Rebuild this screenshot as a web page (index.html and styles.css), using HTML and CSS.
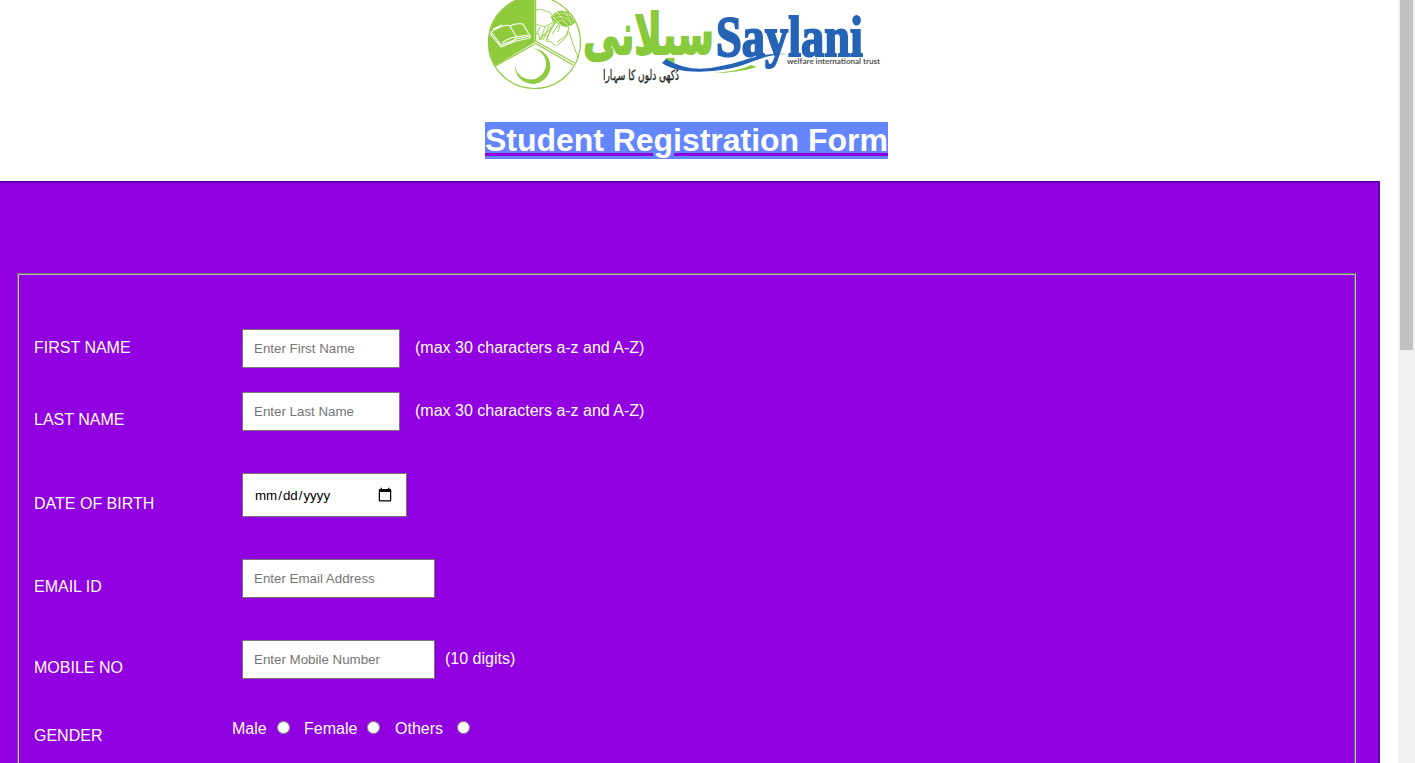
FILE: index.html
```html
<!DOCTYPE html>
<html lang="en">
<head>
<meta charset="utf-8">
<title>Student Registration Form</title>
<link rel="stylesheet" href="styles.css">
</head>
<body>
<div class="page">
<main class="content">
  <header class="header">
    <svg class="logo" viewBox="486 0 396 92" role="img" aria-label="Saylani">
      <g fill="none" stroke="#8fcb3c" stroke-width="1.2" stroke-linejoin="round">
        <circle cx="534.4" cy="42.5" r="46"/>
        <path d="M534 42V-3.5A46 46 0 0 0 495 65Z" fill="#8fcb3c"/>
        <path d="M535.6-3V41L574.5 63M534 44.5 495.5 66M534 42.5 573 65"/>
        <path stroke-width=".9" d="M536 10c5-2 8 1 13 2 5 2 2 7 5 11M536 25c5-1 6 3 10 1l8-4c4-2-3 8-7 10l-5 4M540 27l-4 8M545 27l-5 13M549 26l-6 14M551 28l-5 13M538 33l2 7M541 40c2-7 6-7 7 0M546 41l5 1 5 4M550 28c5-8 8-5 13-2l6 1-2 8-10 7M568 31c-1 8-8 11-11 15M569 32l9 26M558 32l3-10M552 34l7-10M547 37l8-14"/>
        <path d="M551 17c5-9 17-7 21-2 7 7 1 12-8 11l-12-6Z" stroke="none" fill="#8fcb3c"/>
        <path d="M553 16c5-5 15-3 21 3M554 19c7-5 14-1 17 5M557 22c4-3 8-1 10 3M557 12l11 14M564 11l8 12M569 13l5 8M553 17l8 8" stroke="#fff" stroke-width=".8" stroke-dasharray="1.4 1"/>
      </g>
      <path d="M532 48.5A17.7 17.7 0 1 1 515 64.500A15.500 15.500 0 1 0 532 48.500Z" fill="#8fcb3c"/>
      <path d="m491 32 10 13q10-3 15-6l14-3-7-12q-8-1-13 2-5-3-19 6Zm2-3 9-4m0 18q6-5 14-6l12-2M510 26l7 12M491 32v3l10 12 15-6 14-3v-3" fill="none" stroke="#fff" stroke-width="1.1" stroke-linejoin="round"/>
      <text class="logo-urdu" x="583" y="54" textLength="131" lengthAdjust="spacingAndGlyphs" direction="ltr">سیلانی</text>
      <text class="logo-name" x="716" y="56" textLength="147" lengthAdjust="spacingAndGlyphs">Saylani</text>
      <path d="M666 59q24 15 55 7c24-4 36-14 66-12-27 0-39 13-66 16-34 5-52-2-59-7Z" fill="#2463b5"/>
      <path d="M713 73q27-2 38-8l6 2q-20 6-44 6Z" fill="#87ca3c"/>
      <text class="logo-tag" x="787" y="63.500" textLength="93" lengthAdjust="spacingAndGlyphs">welfare international trust</text>
      <text class="logo-motto" x="603" y="80" textLength="76" lengthAdjust="spacingAndGlyphs" direction="ltr">دُکھی دلوں کا سہارا</text>
    </svg>
    <h1 class="title"><span class="selected">Student Registration Form</span></h1>
  </header>
  <form class="form">
    <fieldset class="fields">
      <div class="row row-first">
        <label class="label">FIRST NAME</label>
        <input class="field field-short" type="text" placeholder="Enter First Name">
        <span class="hint">(max 30 characters a-z and A-Z)</span>
      </div>
      <div class="row row-last">
        <label class="label label-low">LAST NAME</label>
        <input class="field field-short" type="text" placeholder="Enter Last Name">
        <span class="hint">(max 30 characters a-z and A-Z)</span>
      </div>
      <div class="row row-date">
        <label class="label label-date">DATE OF BIRTH</label>
        <input class="field field-date" type="date">
      </div>
      <div class="row row-wide">
        <label class="label label-low">EMAIL ID</label>
        <input class="field" type="text" placeholder="Enter Email Address">
      </div>
      <div class="row row-wide">
        <label class="label label-low">MOBILE NO</label>
        <input class="field" type="text" placeholder="Enter Mobile Number">
        <span class="hint hint-near">(10 digits)</span>
      </div>
      <div class="row row-gender">
        <label class="label label-gender">GENDER</label>
        <div class="options">
          <label class="option option-male">Male<input class="radio" type="radio" name="gender"></label>
          <label class="option option-female">Female<input class="radio" type="radio" name="gender"></label>
          <label class="option option-others">Others<input class="radio" type="radio" name="gender"></label>
        </div>
      </div>
    </fieldset>
  </form>
</main>
<div class="scrollbar"><div class="thumb"></div></div>
</div>
</body>
</html>
```
FILE: styles.css
```css
* { box-sizing: border-box; }
body { margin: 0; overflow: hidden; background: #fff; font: 16px/18px "Liberation Sans", Arial, sans-serif; }
.page { display: flex; height: 763px; overflow: hidden; }
.content { flex: 1; display: flex; flex-direction: column; }
.header { height: 181px; flex: none; display: flex; flex-direction: column; align-items: flex-start; }
.logo { display: block; width: 396px; height: 92px; margin-left: 486px; }
.title { margin: 30px 0 0 485px; font-size: 32px; line-height: 37px; letter-spacing: -0.03px; color: #fff; white-space: nowrap; }
.selected { display: block; width: 403px; background: #6386ff; text-decoration: underline #9100e0; text-decoration-thickness: 3px; }
.form { flex: 1; width: 1380px; padding: 90px 22px 0 17px; background: #9100e0; border: solid #6400b0; border-width: 2px 2px 0 0; }
.fields { height: 600px; margin: 0; padding: 54px 14px 0 15px; border: 2px groove #c0c0c0; color: #fff; }
.row { display: flex; align-items: flex-start; }
.row-first { height: 63px; }
.row-last { height: 81px; }
.row-date { height: 86px; }
.row-wide { height: 81px; }
.row-gender { padding-top: -1px; }
.label { width: 208px; padding-top: 10px; flex: none; }
.label-low { padding-top: 19px; }
.label-date { padding-top: 22px; }
.label-gender { width: 198px; padding-top: 6px; }
.field { width: 193px; height: 39px; margin: 0; padding: 2px 11px; border: 1px solid #767676; background: #fff; font: 13.333px "Liberation Sans", Arial, sans-serif; }
.field-short { width: 158px; }
.field-date { width: 165px; height: 44px; color: #000; }
.field-date::-webkit-calendar-picker-indicator { width: 16px; height: 16px; padding: 0; margin-right: 2px; }
.hint { padding: 10px 0 0 15px; }
.hint-near { padding-left: 10px; }
.options { display: flex; margin-top: -1px; }
.option { display: flex; }
.radio { width: 13px; height: 13px; margin: 1px 0 0 10px; }
.option-male { width: 72px; }
.option-female { width: 91px; }
.option-others .radio { margin-left: 14px; }
.scrollbar { width: 17px; padding: 0 2px; background: #f0f0f0; }
.thumb { height: 350px; background: #c1c1c1; }
.logo-urdu { font: bold 57px "DejaVu Sans", sans-serif; fill: #87ca3c; stroke: #87ca3c; stroke-width: 2px; }
.logo-name { font: bold 57px "Liberation Serif", serif; fill: #2463b5; stroke: #2463b5; stroke-width: 2px; }
.logo-tag { font: bold 8px Lato, sans-serif; fill: #555; }
.logo-motto { font: 14px "DejaVu Sans", sans-serif; fill: #222; stroke: #222; stroke-width: .3px; }
```
